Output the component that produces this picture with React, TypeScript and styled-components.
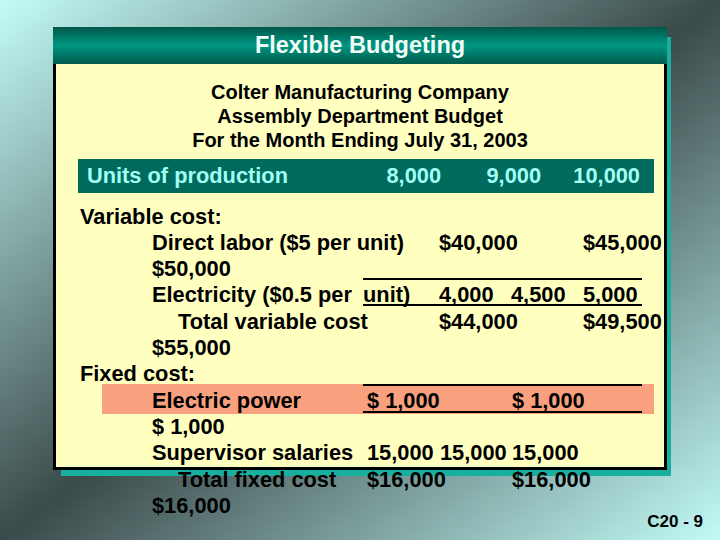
import React from "react";
import styled, { createGlobalStyle } from "styled-components";

const Global = createGlobalStyle`
  html, body { margin: 0; padding: 0; }
  body { font-family: "Liberation Sans", Arial, sans-serif; }
`;

const Slide = styled.div`
  width: 720px;
  height: 540px;
  overflow: hidden;
  box-sizing: border-box;
  padding-top: 27px;
  display: flex;
  flex-direction: column;
  background: linear-gradient(to bottom right, #c4fcf8 0%, #3b4a4a 50%, #c2fbf7 100%);
  font-family: "Liberation Sans", Arial, sans-serif;
  font-weight: bold;
  color: #000;
`;

const Panel = styled.section`
  margin-left: 53px;
  width: 614px;
  height: 443px;
  display: flex;
  flex-direction: column;
  box-shadow: 6px 8px 0 -2px #17b09e;
`;

const Header = styled.h1`
  margin: 0;
  height: 37px;
  flex: none;
  font-size: 23.5px;
  line-height: 37px;
  font-weight: bold;
  text-align: center;
  color: #f2fff8;
  background: linear-gradient(to bottom, #00584a 0%, #009682 50%, #005a4c 100%);
`;

const Body = styled.div`
  flex: 1 1 0;
  min-height: 0;
  box-sizing: border-box;
  background: #ffffc0;
  border: 3px solid #000;
  border-top: none;
  padding-top: 16px;
`;

const Title = styled.div`
  font-size: 20px;
  line-height: 24px;
  text-align: center;
`;

const UnitsBar = styled.div`
  margin: 7px 0 0 22px;
  width: 576px;
  height: 34px;
  box-sizing: border-box;
  padding-left: 9px;
  display: flex;
  background: #006a5c;
  color: #a2fff6;
  font-size: 21.8px;
  line-height: 34px;
  white-space: nowrap;
`;

const UnitCell = styled.span<{ $w: number; $right?: boolean }>`
  flex: none;
  width: ${(p) => p.$w}px;
  text-align: ${(p) => (p.$right ? "right" : "left")};
`;

const Rows = styled.div`
  margin-top: 10.6px;
  font-size: 21.8px;
`;

const Row = styled.div<{ $indent: number }>`
  display: flex;
  align-items: baseline;
  height: 26.3px;
  line-height: 26.3px;
  padding-left: ${(p) => p.$indent}px;
  white-space: nowrap;
`;

const Band = styled.div`
  display: flex;
  align-items: baseline;
  box-sizing: border-box;
  height: 30px;
  margin: -3.7px 0 0 46px;
  width: 552px;
  padding: 3.7px 0 0 50px;
  line-height: 26.3px;
  background: #f9a07f;
  white-space: nowrap;
`;

const Cell = styled.span<{ $w?: number }>`
  flex: none;
  ${(p) => (p.$w ? `width: ${p.$w}px;` : "")}
`;

const Underlined = styled.span<{ $w: number }>`
  flex: none;
  display: flex;
  align-items: baseline;
  width: ${(p) => p.$w}px;
  line-height: 19px;
  border-bottom: 2px solid #000;
`;

const Framed = styled.span<{ $w: number }>`
  flex: none;
  align-self: stretch;
  display: flex;
  box-sizing: border-box;
  width: ${(p) => p.$w}px;
  margin: -3.7px 0 1px 0;
  padding: 1.7px 0 0 4px;
  border-top: 2px solid #000;
  border-bottom: 2px solid #000;
  line-height: 26.3px;
`;

const Footer = styled.div`
  align-self: flex-end;
  margin: 43px 17px 0 0;
  font-size: 17px;
  line-height: 18px;
`;

export default function App() {
  return (
    <>
      <Global />
      <Slide>
        <Panel>
          <Header>Flexible Budgeting</Header>
          <Body>
            <Title>
              Colter Manufacturing Company
              <br />
              Assembly Department Budget
              <br />
              For the Month Ending July 31, 2003
            </Title>
            <UnitsBar>
              <UnitCell $w={254}>Units of production</UnitCell>
              <UnitCell $w={100} $right>8,000</UnitCell>
              <UnitCell $w={100} $right>9,000</UnitCell>
              <UnitCell $w={99} $right>10,000</UnitCell>
            </UnitsBar>
            <Rows>
              <Row $indent={24}>
                <Cell>Variable cost:</Cell>
              </Row>
              <Row $indent={96}>
                <Cell $w={287}>Direct labor ($5 per unit)</Cell>
                <Cell $w={144}>$40,000</Cell>
                <Cell>$45,000</Cell>
              </Row>
              <Row $indent={96}>
                <Cell $w={211}>$50,000</Cell>
                <Underlined $w={279}>{"\u00a0"}</Underlined>
              </Row>
              <Row $indent={96}>
                <Cell $w={211}>Electricity ($0.5 per </Cell>
                <Underlined $w={279}>
                  <Cell $w={76}>unit)</Cell>
                  <Cell $w={72}>4,000</Cell>
                  <Cell $w={72}>4,500</Cell>
                  <Cell>5,000</Cell>
                </Underlined>
              </Row>
              <Row $indent={122}>
                <Cell $w={261}>Total variable cost</Cell>
                <Cell $w={144}>$44,000</Cell>
                <Cell>$49,500</Cell>
              </Row>
              <Row $indent={96}>
                <Cell>$55,000</Cell>
              </Row>
              <Row $indent={24}>
                <Cell>Fixed cost:</Cell>
              </Row>
              <Band>
                <Cell $w={211}>Electric power</Cell>
                <Framed $w={279}>
                  <Cell $w={145}>$ 1,000</Cell>
                  <Cell>$ 1,000</Cell>
                </Framed>
              </Band>
              <Row $indent={96}>
                <Cell>$ 1,000</Cell>
              </Row>
              <Row $indent={96}>
                <Cell $w={215}>Supervisor salaries</Cell>
                <Cell $w={73}>15,000</Cell>
                <Cell $w={72}>15,000</Cell>
                <Cell>15,000</Cell>
              </Row>
              <Row $indent={122}>
                <Cell $w={189}>Total fixed cost</Cell>
                <Cell $w={145}>$16,000</Cell>
                <Cell>$16,000</Cell>
              </Row>
              <Row $indent={96}>
                <Cell>$16,000</Cell>
              </Row>
            </Rows>
          </Body>
        </Panel>
        <Footer>C20 - 9</Footer>
      </Slide>
    </>
  );
}
